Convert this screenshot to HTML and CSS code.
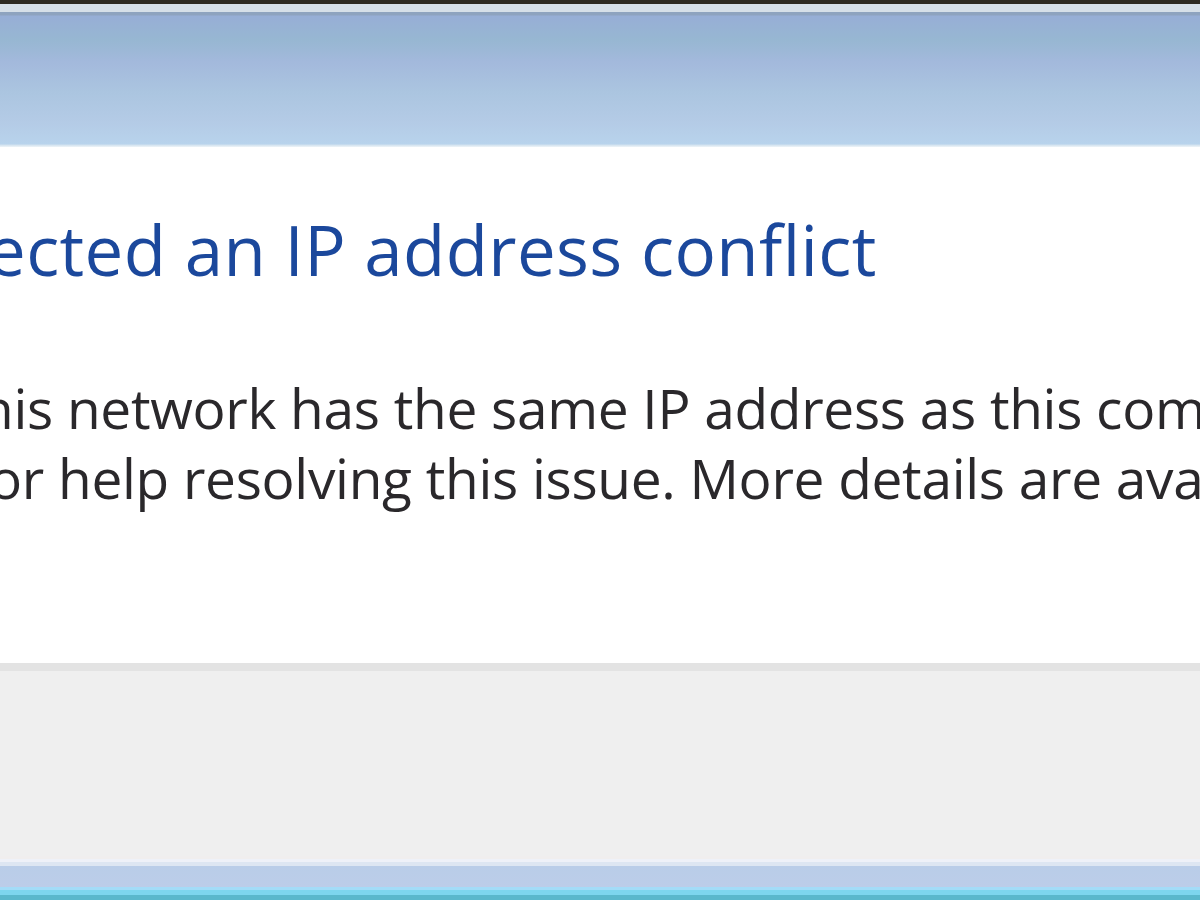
FILE: index.html
```html
<!DOCTYPE html>
<html lang="en">

<head>
    <meta charset="UTF-8">
    <meta name="viewport" content="width=device-width, initial-scale=1.0">
    <title>IP address conflict</title>
    <link rel="stylesheet" href="styles.css">
</head>

<body>
    <div class="window">
        <div class="frame-top"></div>
        <div class="titlebar"></div>

        <div class="content">
            <h1 class="instruction"><span>ected an IP address conflict</span></h1>
            <p class="message">
                <span class="line first">his network has the same IP address as this com</span>
                <span class="line second">or help resolving this issue. More details are ava</span>
            </p>
        </div>

        <div class="footer"></div>
        <div class="frame-bottom"></div>
    </div>
</body>

</html>
```

FILE: styles.css
```css
html, body {
    margin: 0;
    padding: 0;
    height: 100%;
    overflow: hidden;
    background: #ffffff;
}

.window {
    display: flex;
    flex-direction: column;
    width: 1200px;
    height: 900px;
}

.frame-top {
    height: 12px;
    background: linear-gradient(to bottom, #2e2a22 0, #2e2a22 4px, #d6dfe8 4px, #d6dfe8 12px);
}

.titlebar {
    height: 135px;
    background: linear-gradient(to bottom,
        #8ea3bf 0, #8ea3bf 3px,
        #97aed6 4px,
        #97b7d2 28px,
        #a3b9dc 50px,
        #abc5e0 80px,
        #b4cbe6 110px,
        #b8d3ec 132px,
        #d2e2ef 133px, #eef4f8 135px);
}

.content {
    height: 516px;
    background: #ffffff;
    overflow: hidden;
    font-family: "Open Sans", "Noto Sans", sans-serif;
}

.instruction {
    margin: 0;
    padding-top: 62px;
    height: 96px;
    font-size: 69px;
    font-weight: 400;
    line-height: 80px;
    letter-spacing: 0.4px;
    color: #1b489c;
    white-space: nowrap;
}

.instruction span {
    display: block;
    margin-left: -13px;
}

.message {
    margin: 0;
    padding-top: 68px;
    font-size: 55px;
    font-weight: 500;
    line-height: 70px;
    letter-spacing: -0.3px;
    color: #2a282b;
}

.message .line {
    display: block;
    white-space: nowrap;
}

.message .first {
    margin-left: -20px;
}

.message .second {
    margin-left: -11px;
}

.footer {
    height: 193px;
    background: linear-gradient(to bottom, #e3e3e3 0, #e3e3e3 8px, #efefef 8px);
}

.frame-bottom {
    height: 44px;
    background: linear-gradient(to bottom,
        #f0eeee 0, #f0eeee 3px,
        #eef1f8 3px, #eef1f8 6px,
        #dde6f2 6px, #dde6f2 10px,
        #b9cde8 10px, #bccde9 31px,
        #a3dcf8 31px, #a3dcf8 34px,
        #7dd6ee 34px, #7dd6ee 39px,
        #5ab8cc 39px);
}
```
